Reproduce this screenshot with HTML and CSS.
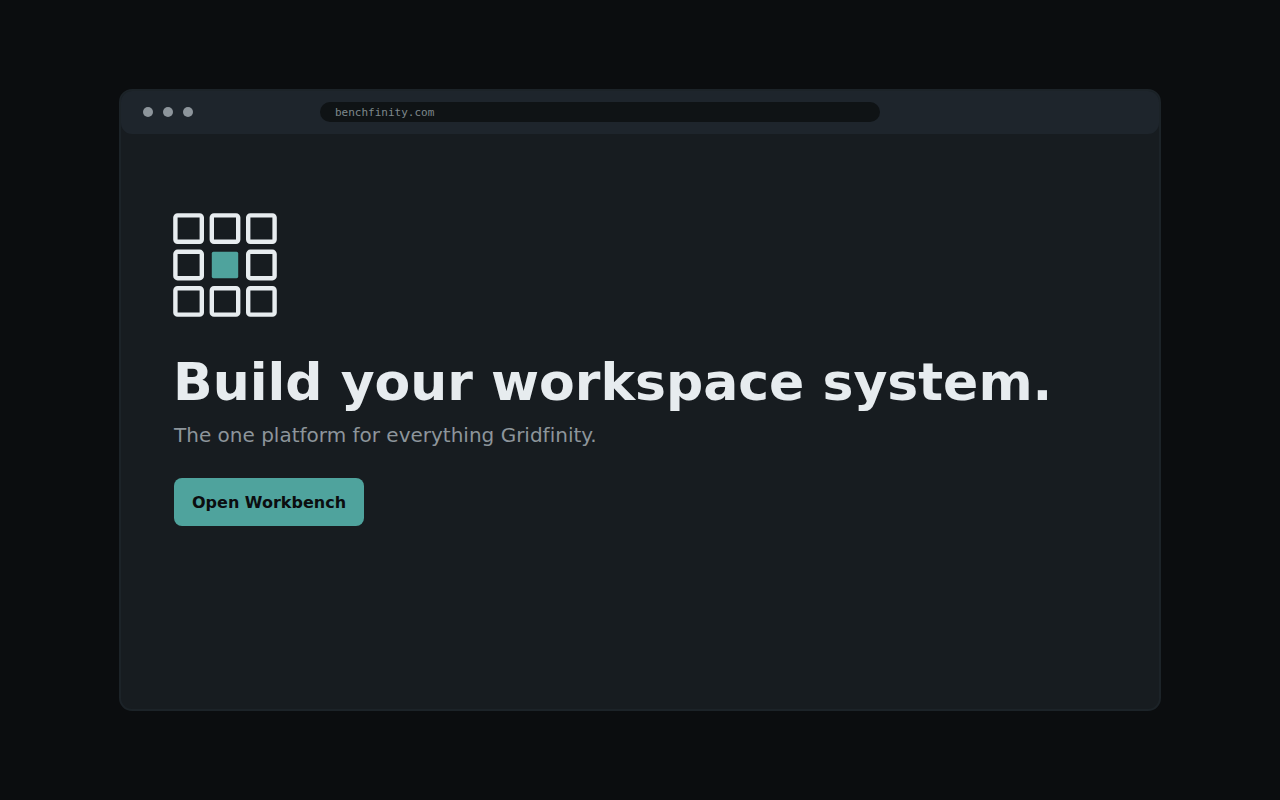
FILE: index.html
```html
<!DOCTYPE html>
<html lang="en">
<head>
<meta charset="utf-8">
<title>Benchfinity</title>
<link rel="stylesheet" href="styles.css">
</head>
<body>
<div class="window">
  <header class="bar">
    <div class="dots"><span class="dot"></span><span class="dot"></span><span class="dot"></span></div>
    <input class="address" type="text" value="benchfinity.com" aria-label="Address" spellcheck="false">
  </header>
  <main class="hero">
    <svg class="logo" viewBox="0 0 104 104" aria-hidden="true">
      <g fill="none" stroke="#e7ecef" stroke-width="4.4">
        <rect x="2.4" y="2.4" width="26.4" height="26.4" rx="2.2"/>
        <rect x="38.8" y="2.4" width="26.4" height="26.4" rx="2.2"/>
        <rect x="75.2" y="2.4" width="26.4" height="26.4" rx="2.2"/>
        <rect x="2.4" y="38.8" width="26.4" height="26.4" rx="2.2"/>
        <rect x="75.2" y="38.8" width="26.4" height="26.4" rx="2.2"/>
        <rect x="2.4" y="75.2" width="26.4" height="26.4" rx="2.2"/>
        <rect x="38.8" y="75.2" width="26.4" height="26.4" rx="2.2"/>
        <rect x="75.2" y="75.2" width="26.4" height="26.4" rx="2.2"/>
      </g>
      <rect x="38.8" y="38.8" width="26.4" height="26.4" rx="1.6" fill="#4fa39d"/>
    </svg>
    <h1 class="title">Build your workspace system.</h1>
    <div class="actions">
      <p class="subtitle">The one platform for everything Gridfinity.</p>
      <button class="cta" type="button">Open Workbench</button>
    </div>
  </main>
</div>
</body>
</html>
```
FILE: styles.css
```css
* { box-sizing: border-box; }
body {
  margin: 0;
  min-height: 100vh;
  padding: 89px 119px;
  display: flex;
  background: #0b0d0f;
  font-family: Verdana, "DejaVu Sans", sans-serif;
  font-variant-ligatures: none;
}
.window {
  flex: 1;
  border: 2px solid #1c2328;
  border-radius: 13px;
  background: #171c20;
}
.bar {
  display: flex;
  align-items: center;
  height: 43px;
  padding: 0 22px 1px;
  border-radius: 11px;
  background: #1e252c;
}
.dots { display: flex; gap: 10px; width: 177px; }
.dot { width: 10px; height: 10px; border-radius: 50%; background: #8d959b; }
.address {
  width: 560px;
  max-width: 60%;
  height: 20px;
  padding: 0 15px;
  border: 0;
  border-radius: 10px;
  background: #0f1315;
  color: #7e888c;
  font: 11px "DejaVu Sans Mono", monospace;
}
.hero {
  display: flex;
  flex-direction: column;
  align-items: flex-start;
  padding: 79px 52px;
}
.logo { width: 104px; height: 104px; }
.title {
  margin: 35px 0 0;
  color: #e7ecef;
  font-size: 52px;
  line-height: 60px;
  font-weight: 700;
}
.actions { padding: 11px 1px 0; }
.subtitle {
  margin: 0 0 31px;
  color: #8d959b;
  font-size: 20px;
  line-height: 24px;
}
.cta {
  height: 48px;
  padding: 0 18px;
  border: 0;
  border-radius: 8px;
  background: #4fa39d;
  color: #0b0d0f;
  font: 700 16px Verdana, "DejaVu Sans", sans-serif;
}
```
